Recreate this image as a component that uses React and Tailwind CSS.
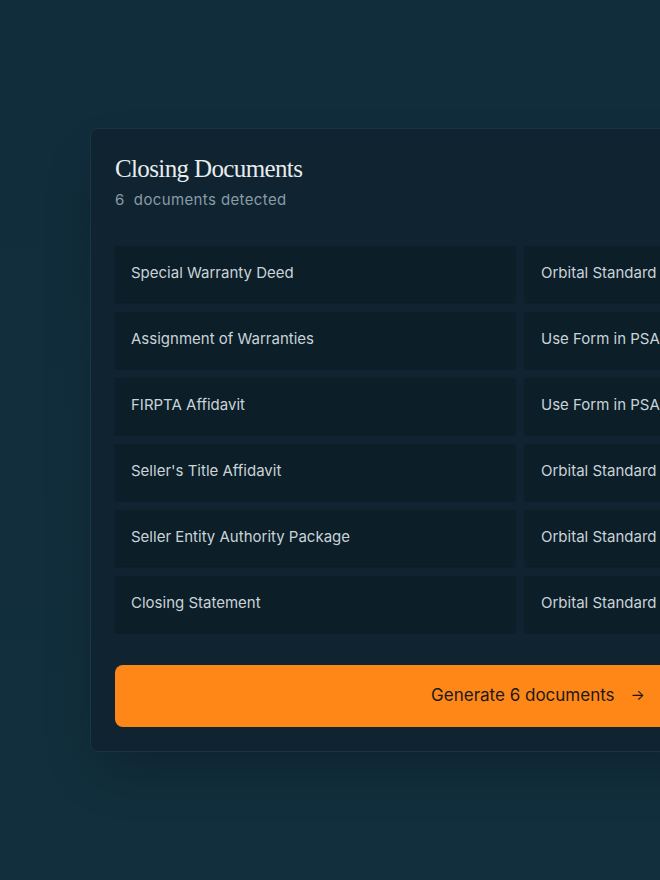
const docs = [
  ["Special Warranty Deed", "Orbital Standard"],
  ["Assignment of Warranties", "Use Form in PSA"],
  ["FIRPTA Affidavit", "Use Form in PSA"],
  ["Seller's Title Affidavit", "Orbital Standard"],
  ["Seller Entity Authority Package", "Orbital Standard"],
  ["Closing Statement", "Orbital Standard"],
];

export default function App() {
  return (
    <div
      className="w-[660px] h-[880px] overflow-hidden bg-gradient-to-b from-[#112c3b] to-[#122f3d] pt-[128px] pl-[90px]"
      style={{ fontFamily: "Inter, 'Noto Sans', sans-serif" }}
    >
      <div className="w-[896px] flex-none rounded-lg border border-[#183644] bg-[#0f2430] px-6 pt-6 pb-6 shadow-2xl">
        <h1
          className="text-[25px] leading-8 text-[#e8ecee] tracking-tight"
          style={{ fontFamily: "'Liberation Serif', serif" }}
        >
          Closing Documents
        </h1>
        <p className="mt-1 text-[15px] text-[#8a9ba5] tracking-wide">
          6&nbsp; documents detected
        </p>
        <div className="mt-[34px] flex flex-col gap-[10px]">
          {docs.map(([name, source]) => (
            <div key={name} className="flex gap-[10px]">
              <div className="w-[400px] h-[56px] flex items-center px-4 bg-[#0c1e28] text-[15px] text-[#c9d3d8] shadow-[0_1px_2px_rgba(0,0,0,0.3)]">
                {name}
              </div>
              <div className="flex-1 h-[56px] flex items-center px-4 bg-[#0c1e28] text-[15px] text-[#c9d3d8] shadow-[0_1px_2px_rgba(0,0,0,0.3)]">
                {source}
              </div>
            </div>
          ))}
        </div>
        <button className="mt-[33px] w-full h-[62px] rounded-lg bg-[#ff8717] flex items-center justify-center gap-4 text-[17px] text-[#1a1a1a]">
          Generate 6 documents
          <span className="text-[15px]">→</span>
        </button>
      </div>
    </div>
  );
}
